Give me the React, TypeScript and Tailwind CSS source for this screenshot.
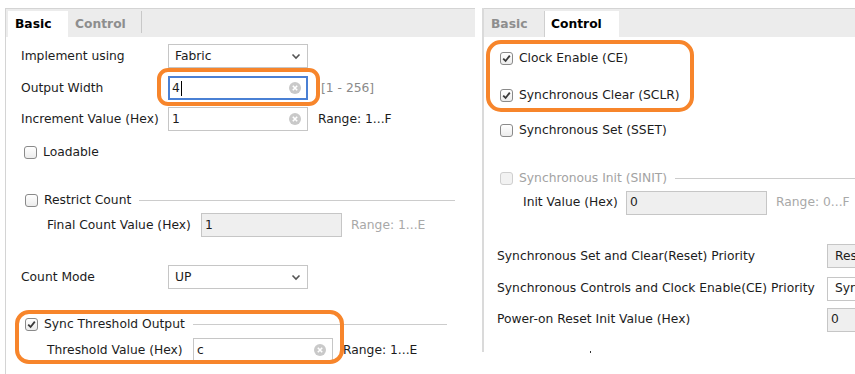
import React from "react";

function Check({ checked, disabled }: { checked?: boolean; disabled?: boolean }) {
    return (
        <span
            className={`w-[13px] h-[13px] rounded-[3px] border flex items-center justify-center shrink-0 ${
                disabled ? "border-[#cfcfcf] bg-[#f2f2f2]" : "border-[#8a8a8a] bg-gradient-to-b from-white to-[#ececec]"
            }`}
        >
            {checked && (
                <svg width="9" height="9" viewBox="0 0 9 9">
                    <path d="M1.2 4.6 L3.6 7 L7.8 1.6" fill="none" stroke="#3a3a3a" strokeWidth="1.8" />
                </svg>
            )}
        </span>
    );
}

function ClearIcon() {
    return (
        <svg width="12" height="12" viewBox="0 0 12 12" className="shrink-0">
            <circle cx="6" cy="6" r="6" fill="#c9c9c9" />
            <path d="M3.8 3.8 L8.2 8.2 M8.2 3.8 L3.8 8.2" stroke="white" strokeWidth="1.6" />
        </svg>
    );
}

function Chevron() {
    return (
        <svg width="10" height="7" viewBox="0 0 10 7" className="shrink-0">
            <path d="M1.5 1.5 L5 5 L8.5 1.5" fill="none" stroke="#555" strokeWidth="1.6" />
        </svg>
    );
}

function Field({
    children,
    w,
    kind,
}: {
    children: React.ReactNode;
    w: string;
    kind: "drop" | "text" | "focus" | "disabled" | "stub" | "stubWhite" | "stubNum";
}) {
    const base = "h-[24px] flex items-center shrink-0 " + w;
    if (kind === "drop")
        return (
            <div className={base + " border border-[#c6c6c6] bg-white justify-between pl-[6px] pr-[6px]"}>
                <span>{children}</span>
                <Chevron />
            </div>
        );
    if (kind === "focus")
        return (
            <div className={base + " border-2 border-[#4a80d4] bg-white justify-between pl-[2px] pr-[5px]"}>
                <span className="flex items-center">
                    {children}
                    <span className="w-px h-[15px] bg-black ml-px" />
                </span>
                <ClearIcon />
            </div>
        );
    if (kind === "text")
        return (
            <div className={base + " border border-[#c6c6c6] bg-white justify-between pl-[3px] pr-[6px]"}>
                <span>{children}</span>
                <ClearIcon />
            </div>
        );
    if (kind === "stubWhite")
        return <div className={base + " border border-[#c6c6c6] border-r-0 bg-white pl-[7px]"}>{children}</div>;
    if (kind === "stub")
        return <div className={base + " border border-[#c6c6c6] border-r-0 bg-[#efefef] pl-[7px]"}>{children}</div>;
    if (kind === "stubNum")
        return <div className={base + " border border-[#c6c6c6] border-r-0 bg-[#efefef] pl-[3px]"}>{children}</div>;
    return <div className={base + " border border-[#c6c6c6] bg-[#efefef] pl-[3px]"}>{children}</div>;
}

function Tabs({ active }: { active: "Basic" | "Control" }) {
    return (
        <div className="h-[29px] bg-[#ececec] border-t border-[#d4d4d4] flex items-end pl-[2px]">
            {active === "Basic" ? (
                <>
                    <div className="h-[26px] w-[60px] flex items-center pl-[7px] font-bold bg-white text-black">Basic</div>
                    <div className="h-[26px] w-[73px] flex items-center pl-[7px] font-bold text-[#8e8e8e]">Control</div>
                    <span className="w-px h-[22px] bg-[#c8c8c8] mb-[4px]" />
                </>
            ) : (
                <>
                    <div className="h-[26px] w-[58px] flex items-center pl-[5px] font-bold text-[#8e8e8e]">Basic</div>
                    <div className="h-[26px] w-[75px] flex items-center pl-[6px] font-bold bg-white text-black border-l border-[#cfcfcf]">
                        Control
                    </div>
                </>
            )}
        </div>
    );
}

export default function App() {
    return (
        <div className="w-[855px] h-[374px] bg-white flex relative overflow-hidden text-[12.3px] text-[#1c1c1c] font-['DejaVu_Sans',sans-serif]">
            {/* Basic page */}
            <div className="w-[475px] shrink-0 pt-[8px] pl-[5px] flex flex-col">
                <div className="flex-1 flex flex-col border-l border-[#d4d4d4]">
                    <Tabs active="Basic" />
                    <div className="flex-1 flex flex-col pl-[15px]">
                        <div className="flex items-center h-[24px] mt-[7px]">
                            <span className="w-[147px]">Implement using</span>
                            <Field w="w-[140px]" kind="drop">Fabric</Field>
                        </div>
                        <div className="flex items-center h-[24px] mt-[8px]">
                            <span className="w-[147px]">Output Width</span>
                            <Field w="w-[140px]" kind="focus">4</Field>
                            <span className="ml-[13px] text-[#8a8a8a]">[1 - 256]</span>
                        </div>
                        <div className="flex items-center h-[24px] mt-[7px]">
                            <span className="w-[147px]">Increment Value (Hex)</span>
                            <Field w="w-[140px]" kind="text">1</Field>
                            <span className="ml-[10px]">Range: 1...F</span>
                        </div>
                        <div className="flex items-center h-[20px] mt-[11px] pl-[3px] gap-[6px]">
                            <Check />
                            <span>Loadable</span>
                        </div>
                        <div className="flex items-center h-[20px] mt-[28px] pl-[4px] gap-[6px] mr-[20px]">
                            <Check />
                            <span>Restrict Count</span>
                            <span className="flex-1 h-px bg-[#cccccc] ml-[2px]" />
                        </div>
                        <div className="flex items-center h-[24px] mt-[3px] pl-[26px]">
                            <span className="w-[154px]">Final Count Value (Hex)</span>
                            <Field w="w-[141px]" kind="disabled">1</Field>
                            <span className="ml-[9px] text-[#a8a8a8]">Range: 1...E</span>
                        </div>
                        <div className="flex items-center h-[24px] mt-[28px]">
                            <span className="w-[147px]">Count Mode</span>
                            <Field w="w-[140px]" kind="drop">UP</Field>
                        </div>
                        <div className="flex items-center h-[20px] mt-[25px] pl-[4px] gap-[6px] mr-[28px]">
                            <Check checked />
                            <span>Sync Threshold Output</span>
                            <span className="flex-1 h-px bg-[#cccccc] ml-[2px]" />
                        </div>
                        <div className="flex items-center h-[24px] mt-[4px] pl-[26px]">
                            <span className="w-[146px]">Threshold Value (Hex)</span>
                            <Field w="w-[140px]" kind="text">c</Field>
                            <span className="ml-[10px]">Range: 1...E</span>
                        </div>
                    </div>
                </div>
            </div>

            {/* Control page */}
            <div className="flex-1 ml-[7px] pt-[8px] h-[352px] flex flex-col">
                <div className="flex-1 flex flex-col border-l-2 border-[#dadada]">
                    <Tabs active="Control" />
                    <div className="flex-1 flex flex-col pl-[13px]">
                        <div className="flex items-center h-[20px] mt-[11px] pl-[3px] gap-[6px]">
                            <Check checked />
                            <span>Clock Enable (CE)</span>
                        </div>
                        <div className="flex items-center h-[20px] mt-[17px] pl-[3px] gap-[6px]">
                            <Check checked />
                            <span>Synchronous Clear (SCLR)</span>
                        </div>
                        <div className="flex items-center h-[20px] mt-[15px] pl-[3px] gap-[6px]">
                            <Check />
                            <span>Synchronous Set (SSET)</span>
                        </div>
                        <div className="flex items-center h-[20px] mt-[28px] pl-[3px] gap-[6px] text-[#a3a3a3]">
                            <Check disabled />
                            <span>Synchronous Init (SINIT)</span>
                            <span className="flex-1 h-px bg-[#cccccc] ml-[2px]" />
                        </div>
                        <div className="flex items-center h-[23px] mt-[3px] pl-[26px]">
                            <span className="w-[103px]">Init Value (Hex)</span>
                            <Field w="w-[141px]" kind="disabled">0</Field>
                            <span className="ml-[9px] text-[#a8a8a8]">Range: 0...F</span>
                        </div>
                        <div className="flex items-center h-[24px] mt-[30px]">
                            <span className="w-[330px] shrink-0">Synchronous Set and Clear(Reset) Priority</span>
                            <Field w="w-[40px]" kind="stub">Res</Field>
                        </div>
                        <div className="flex items-center h-[23px] mt-[9px]">
                            <span className="w-[330px] shrink-0">Synchronous Controls and Clock Enable(CE) Priority</span>
                            <Field w="w-[40px]" kind="stubWhite">Syn</Field>
                        </div>
                        <div className="flex items-center h-[23px] mt-[8px]">
                            <span className="w-[330px] shrink-0">Power-on Reset Init Value (Hex)</span>
                            <Field w="w-[40px]" kind="stubNum">0</Field>
                        </div>
                    </div>
                </div>
            </div>

            {/* annotation marks */}
            <div className="absolute left-[157px] top-[68px] w-[163px] h-[38px] border-[4px] border-[#f7852b] rounded-[11px]" />
            <div className="absolute left-[15px] top-[310px] w-[329px] h-[54px] border-[4px] border-[#f7852b] rounded-[14px]" />
            <div className="absolute left-[486px] top-[40px] w-[208px] h-[72px] border-[4px] border-[#f7852b] rounded-[15px]" />
            <div className="absolute left-[590px] top-[351px] w-px h-[2px] bg-[#333]" />
        </div>
    );
}
